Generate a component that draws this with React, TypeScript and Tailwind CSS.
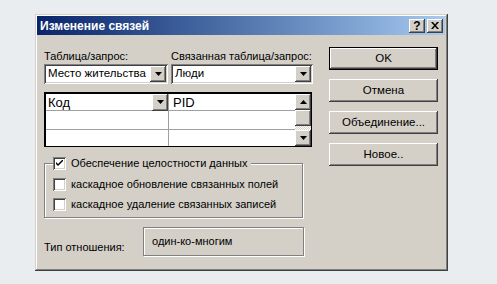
import React from "react";

const raised =
  "bg-[#d4d0c8] shadow-[inset_-1px_-1px_#404040,inset_1px_1px_#ffffff,inset_-2px_-2px_#808080,inset_2px_2px_#d4d0c8]";
const sunken =
  "bg-white shadow-[inset_1px_1px_#808080,inset_-1px_-1px_#ffffff,inset_2px_2px_#404040,inset_-2px_-2px_#d4d0c8]";

function ArrowDown() {
  return (
    <svg width="7" height="4" viewBox="0 0 7 4">
      <path d="M0 0h7L3.5 4z" fill="#000" />
    </svg>
  );
}

function ArrowUp() {
  return (
    <svg width="7" height="4" viewBox="0 0 7 4">
      <path d="M0 4h7L3.5 0z" fill="#000" />
    </svg>
  );
}

function Combo({ text, width }: { text: string; width: string }) {
  return (
    <div className={`${sunken} ${width} flex h-[20px] items-center p-[2px]`}>
      <span className="flex-1 whitespace-nowrap pl-[2px] text-[11.5px] leading-none text-black">{text}</span>
      <div className={`${raised} flex h-[16px] w-[16px] items-center justify-center`}>
        <ArrowDown />
      </div>
    </div>
  );
}

function Checkbox({ checked, label }: { checked?: boolean; label: string }) {
  return (
    <div className="flex items-center gap-[5px]">
      <div className={`${sunken} flex h-[13px] w-[13px] items-center justify-center`}>
        {checked ? (
          <svg width="7" height="7" viewBox="0 0 7 7">
            <path d="M0 2v2l2 2 5-5V-1L2 4z" fill="#000" />
          </svg>
        ) : null}
      </div>
      <span className="whitespace-nowrap text-[11px] leading-none text-black">{label}</span>
    </div>
  );
}

function Button({ label, isDefault }: { label: string; isDefault?: boolean }) {
  return (
    <div
      className={`flex h-[23px] w-[109px] items-center justify-center whitespace-nowrap bg-[#d4d0c8] text-[11.5px] text-black ${
        isDefault
          ? "shadow-[inset_0_0_0_1px_#000000,inset_-2px_-2px_#404040,inset_2px_2px_#ffffff,inset_-3px_-3px_#808080]"
          : "shadow-[inset_-1px_-1px_#404040,inset_1px_1px_#ffffff,inset_-2px_-2px_#808080]"
      }`}
    >
      {label}
    </div>
  );
}

export default function App() {
  return (
    <div
      className="h-[284px] w-[497px] overflow-hidden bg-[#e9edf0] pl-[35px] pt-[14px]"
      style={{ fontFamily: '"Liberation Sans", Arial, sans-serif' }}
    >
      <div className="flex h-[257px] w-[413px] flex-col bg-[#d4d0c8] p-[2px] pr-[3px] shadow-[inset_-1px_-1px_#404040,inset_1px_1px_#d4d0c8,inset_-2px_-2px_#808080,inset_2px_2px_#ffffff]">
        <header className="flex h-[19px] items-center justify-between bg-gradient-to-r from-[#0a246a] to-[#a6caf0] pl-[3px] pr-[2px]">
          <span className="whitespace-nowrap text-[12px] font-bold leading-none text-white">Изменение связей</span>
          <div className="flex items-center gap-[2px]">
            <div className={`${raised} flex h-[14px] w-[16px] items-center justify-center text-[12px] font-bold leading-none text-black`}>
              ?
            </div>
            <div className={`${raised} flex h-[14px] w-[16px] items-center justify-center`}>
              <svg width="8" height="7" viewBox="0 0 8 7">
                <path d="M0 0h2l2 2.5L6 0h2L5 3.5 8 7H6L4 4.5 2 7H0l3-3.5z" fill="#000" />
              </svg>
            </div>
          </div>
        </header>

        <div className="flex flex-1 pl-[7px]">
          <div className="flex w-[269px] flex-col">
            <div className="mt-[14px] flex h-[15px] items-center whitespace-nowrap text-[11px] leading-none text-black">
              <span className="w-[127px]">Таблица/запрос:</span>
              <span>Связанная таблица/запрос:</span>
            </div>
            <div className="flex gap-[3px]">
              <Combo text="Место жительства" width="w-[124px]" />
              <Combo text="Люди" width="w-[142px]" />
            </div>

            <div className="mt-[8px] flex h-[55px] w-[268px] border border-black border-l-2 border-t-2 bg-white">
              <div className="flex flex-1 flex-col">
                <div className="flex h-[17px] border-b border-[#a0a0a0]">
                  <div className="flex w-[123px] items-center border-r border-[#a0a0a0]">
                    <span className="flex-1 pl-[2px] text-[13px] leading-none text-black">Код</span>
                    <div className={`${raised} flex h-[17px] w-[16px] items-center justify-center`}>
                      <ArrowDown />
                    </div>
                  </div>
                  <span className="flex items-center pl-[4px] text-[13px] leading-none text-black">PID</span>
                </div>
                <div className="flex h-[19px] border-b border-[#a0a0a0]">
                  <div className="w-[123px] border-r border-[#a0a0a0]" />
                </div>
                <div className="flex flex-1">
                  <div className="w-[123px] border-r border-[#a0a0a0]" />
                </div>
              </div>
              <div className="flex w-[16px] flex-col">
                <div className={`${raised} flex h-[16px] items-center justify-center`}>
                  <ArrowUp />
                </div>
                <div className={`${raised} h-[16px]`} />
                <div className="flex-1 bg-[repeating-conic-gradient(#ffffff_0%_25%,#d4d0c8_0%_50%)] bg-[length:2px_2px]" />
                <div className={`${raised} flex h-[16px] items-center justify-center`}>
                  <ArrowDown />
                </div>
              </div>
            </div>

            <div className="relative mt-[16px] flex h-[55px] w-[259px] flex-col gap-[7px] border border-[#808080] pl-[8px] pt-[14px] shadow-[1px_1px_#ffffff,inset_1px_1px_#ffffff]">
              <div className="absolute -top-[7px] left-[8px] bg-[#d4d0c8] pr-[4px]">
                <Checkbox checked label="Обеспечение целостности данных" />
              </div>
              <Checkbox label="каскадное обновление связанных полей" />
              <Checkbox label="каскадное удаление связанных записей" />
            </div>

            <div className="mt-[9px] flex items-center">
              <span className="w-[99px] whitespace-nowrap pt-[12px] text-[11px] leading-none text-black">Тип отношения:</span>
              <div className="h-[29px] w-[161px] whitespace-nowrap border border-[#808080] pl-[8px] pt-[8px] text-[11px] leading-none text-black shadow-[1px_1px_#ffffff,inset_1px_1px_#ffffff]">
                один-ко-многим
              </div>
            </div>
          </div>

          <div className="ml-[16px] mt-[12px] flex flex-col gap-[9px]">
            <Button label="OK" isDefault />
            <Button label="Отмена" />
            <Button label="Объединение..." />
            <Button label="Новое.." />
          </div>
        </div>
      </div>
    </div>
  );
}
